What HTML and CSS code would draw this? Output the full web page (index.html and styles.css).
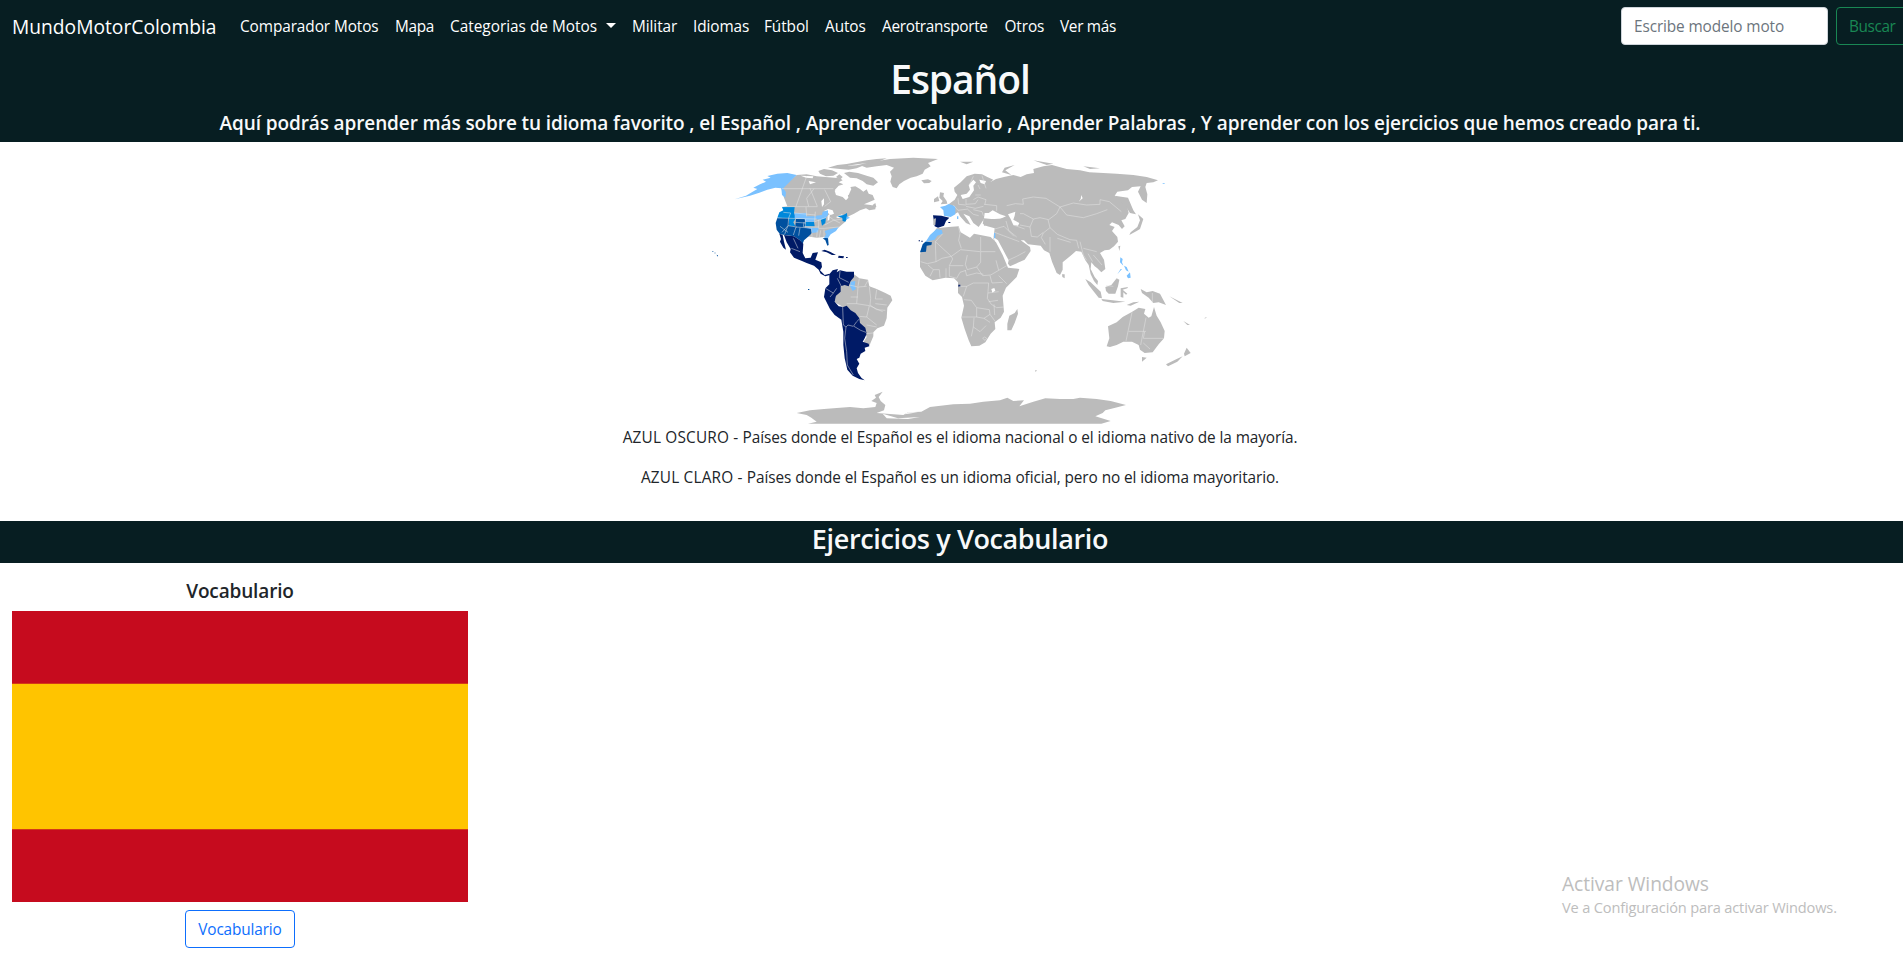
FILE: index.html
```html
<!DOCTYPE html>
<html lang="es">
<head>
<meta charset="utf-8">
<title>Español - MundoMotorColombia</title>
<link rel="stylesheet" href="styles.css">
</head>
<body>
<div class="page">
  <nav class="navbar">
    <a class="brand">MundoMotorColombia</a>
    <ul class="menu">
      <li>Comparador Motos</li><li class="mapa">Mapa</li><li class="dropdown">Categorias de Motos</li><li>Militar</li><li>Idiomas</li><li>Fútbol</li><li>Autos</li><li class="aero">Aerotransporte</li><li>Otros</li><li class="more">Ver más</li>
    </ul>
    <form class="search">
      <input class="search-input" type="text" placeholder="Escribe modelo moto">
      <button class="btn btn-success" type="button">Buscar</button>
    </form>
  </nav>
  <header class="hero">
    <h1>Español</h1>
    <h5>Aquí podrás aprender más sobre tu idioma favorito , el Español , Aprender vocabulario , Aprender Palabras , Y aprender con los ejercicios que hemos creado para ti.</h5>
  </header>
  <section class="map-section">
    <svg class="map" viewBox="0 -9 1560 846" role="img" aria-label="Mapa">
      <!-- Norteamérica -->
      <g class="land">
        <path d="M290 90L320 88 350 94 385 97 420 100 428 106 416 112 430 118 420 127 404 137 408 150 428 156 438 166 445 158 442 142 452 126 466 124 480 132 490 140 500 133 506 146 518 150 524 164 508 171 492 178 512 180 527 184 526 193 508 196 498 190 480 196 462 206 446 214 434 232 420 244 410 252 392 262 374 276 350 278 310 272 258 250 248 186 262 184 252 158 244 130Z"/>
        <path d="M355 78L372 72 396 76 414 84 400 92 378 94 360 86ZM384 68L412 60 440 57 468 52 500 46 530 42 560 40 540 48 516 55 492 61 470 70 446 74 420 72ZM432 84L448 80 474 84 500 92 520 98 534 112 520 122 500 118 488 108 470 100 450 98ZM418 88L428 96 420 104 408 96Z"/>
        <path d="M484 62L520 50 570 42 640 38 714 42 684 54 692 64 674 74 668 86 650 94 632 98 612 108 598 118 590 130 578 126 571 110 575 94 570 80 582 68 560 60 530 64 500 68Z"/>
        <path d="M664 106L684 103 695 108 688 114 672 115Z"/>
        <path d="M518 180l8-6 3 12-12 4zM488 104l14 2 10 10-12 0z"/>
      </g>
      <path class="water" d="M405 134L416 122 432 118 448 122 454 132 446 150 436 152 430 142 412 144ZM372 198L384 192 398 196 402 206 392 210 384 204ZM383 212L390 206 388 224 383 228ZM302 92L340 94 338 100 318 98ZM326 108L348 112 330 118ZM364 168l8-8 0 18-6 8zM408 216l18-8 4 4-16 8zM500 72L530 66 562 70 540 76ZM460 76L500 80 490 85ZM440 62L500 54 470 61Z"/>
      <!-- Estados Unidos -->
      <path class="light" d="M290 90L262 84 232 86 202 93 212 98 188 104 198 110 180 118 160 128 172 132 158 140 138 152 104 163 150 152 178 143 202 134 226 128 244 130 246 150 256 158 258 142 250 130Z"/>
      <path class="sky" d="M246 186L284 186 282 204 288 218 280 232 286 244 264 242 266 220 232 218 238 202 250 196ZM311 231L342 231 344 244 312 244ZM362 222L378 216 376 234 366 242ZM412 214L430 210 441 204 442 218 436 230 428 228 426 218Z"/>
      <path class="mid" d="M232 219L266 219 268 242 286 244 288 222 316 222 316 248 335 250 336 264 326 274 312 286 308 296 300 286 282 274 240 268 230 254 227 234ZM368 280L384 278 386 300 382 302 376 286Z"/>
      <path class="light" d="M284 204L318 204 320 214 346 214 346 222 342 230 316 230 314 222 284 220ZM348 212L366 210 368 200 384 196 384 210 378 218 362 224 346 222ZM310 248L356 248 354 262 336 264 334 252ZM374 258L392 252 416 246 408 258 392 268 384 280 372 278 378 268ZM440 214l10 4-12 6z"/>
      <!-- México, Caribe y Centroamérica -->
      <path class="dark" d="M238 266L248 270 252 290 258 314 250 308 240 290 243 282ZM252 270L282 274 300 286 310 296 308 324 316 340 332 338 338 324 354 322 346 344 364 352 366 366 360 376 374 390 388 386 390 390 376 394 362 386 356 374 342 362 320 354 306 348 282 338 270 322 272 312 260 292ZM364 318L374 314 390 320 408 330 396 330 380 322ZM416 332L432 334 430 340 414 338ZM438 336h5v3h-5z"/>
      <!-- Sudamérica -->
      <path class="land" d="M462 388L478 400 504 404 508 424 530 432 556 444 572 452 577 466 562 488 560 520 552 542 532 550 520 562 520 574 508 602 490 592 500 576 490 550 470 520 430 486 404 472 412 430 430 410Z"/>
      <path class="dark" d="M388 388L398 376 414 372 410 382 420 376 440 380 462 380 462 396 452 408 446 424 434 420 422 424 422 440 408 452 404 470 416 484 430 486 440 482 452 496 466 504 478 520 480 534 496 548 500 566 494 580 488 590 506 596 508 604 494 608 496 618 482 626 478 638 470 642 478 656 470 670 474 684 484 698 494 706 478 702 458 692 442 674 434 640 430 600 430 560 424 524 404 510 390 492 372 456 376 430 388 418Z"/>
      <path class="light" d="M452 410L466 408 464 422 468 432 458 438 450 424Z"/>
      <!-- Europa y Asia -->
      <g class="land">
        <path d="M720 142L732 144 730 154 740 168 742 176 722 178 728 168 718 158ZM702 162L714 154 718 168 702 172Z"/>
        <path d="M762 128L782 112 800 94 824 86 846 88 862 96 880 104 870 112 888 102 912 96 940 90 962 96 980 88 1002 84 1000 72 1030 64 1056 60 1078 66 1100 72 1140 76 1168 82 1210 84 1250 86 1300 90 1340 96 1374 106 1360 112 1340 114 1336 126 1342 148 1340 174 1326 164 1314 140 1322 124 1296 126 1284 136 1252 140 1244 152 1264 164 1280 178 1286 204 1276 222 1264 226 1274 244 1266 252 1256 240 1236 232 1228 240 1244 246 1236 258 1252 276 1254 290 1242 304 1228 314 1214 316 1200 324 1212 344 1216 372 1204 382 1192 370 1184 364 1174 352 1172 372 1184 396 1194 408 1192 420 1182 408 1172 388 1166 360 1156 346 1144 320 1128 318 1110 334 1088 352 1088 374 1080 390 1070 384 1056 350 1048 324 1032 316 1022 302 984 298 972 286 962 286 990 306 992 318 974 344 930 364 924 356 896 312 880 282 884 250 862 244 848 236 852 222 836 246 820 234 808 214 790 206 804 226 812 240 798 234 780 214 774 202 752 214 746 178 764 164 772 150 764 140Z"/>
        <path d="M1244 152L1284 158 1300 196 1308 208 1290 204 1276 182 1260 168Z"/>
        <path d="M1314 208L1330 222 1320 252 1310 258 1288 270 1292 262 1312 246 1320 226ZM1255 304l6-2-3 16zM1086 388l8 0 0 12-7-4zM906 82l8-14 30-8-28 16 18 14zM780 50l40 0-20 8zM1000 46l60 10-20 4zM1150 64l50 6-30 2z"/>
      </g>
      <path class="water" d="M800 146L810 134 806 120 820 104 828 112 820 122 822 136 808 156 788 162 782 150ZM852 220L854 204 866 204 878 196 900 208 918 214 900 222 874 222ZM924 208L946 200 944 212 940 224 958 234 954 242 940 240 932 222ZM880 276L894 286 910 316 926 346 922 364 910 354 896 324ZM1144 150l4 10-12 10 6-8zM838 104l20 4-4 10-12-4z"/>
      <path class="land" d="M850 224L918 220 912 240 852 242Z"/>
      <path class="dark" d="M699 211L724 212 748 218 738 228 732 242 714 248 704 244ZM745 231h6v3h-6z"/>
      <path class="land" d="M700 222L708 220 706 240 700 240Z"/>
      <path class="light" d="M720 186L736 182 746 177 766 184 766 208 752 216 732 212 730 196ZM771 214h4v8h-4z"/>
      <!-- África -->
      <path class="land" d="M710 250L746 246 776 244 782 262 810 278 822 266 872 276 888 292 908 330 924 368 958 372 950 396 918 428 908 452 912 500 902 518 884 532 886 552 872 566 856 592 838 602 814 604 806 586 794 552 784 518 792 482 786 456 774 444 774 412 762 400 736 398 698 406 676 392 660 366 660 330 664 312Z"/>
      <path class="light" d="M710 252L726 256 728 266 712 272 704 284 676 292 690 270Z"/>
      <path class="mid" d="M660 322L668 298 676 290 696 292 694 300 680 302 678 320Z"/>
      <path class="dark" d="M775 419h6v6h-6zM656 286h4v3h-4zM664 287h4v3h-4z"/>
      <path class="light" d="M882 264h4v16h-4z"/>
      <path class="land" d="M952 492L954 506 944 534 934 556 922 556 922 536 928 512 944 504Z"/>
      <path class="water" d="M874 432l9-3 3 8-9 6z"/>
      <!-- Sudeste asiático y Oceanía -->
      <g class="land">
        <path d="M1156 402L1172 412 1202 440 1206 460 1196 458 1180 438 1166 420ZM1204 462L1238 466 1276 470 1240 474 1208 468ZM1216 426L1234 420 1250 400 1258 404 1254 424 1246 446 1226 446 1218 438ZM1262 430L1284 426 1282 430 1268 434 1282 446 1278 449 1270 442 1270 458 1262 456ZM1322 432L1340 442 1358 438 1380 446 1398 480 1376 472 1360 474 1346 458 1326 444ZM1280 480l20-8 18-2-26 12z"/>
        <path d="M1220 604L1228 580 1224 544 1250 532 1268 516 1294 502 1304 496 1316 488 1336 492 1332 506 1346 518 1354 514 1362 486 1370 512 1382 532 1394 558 1392 580 1376 598 1358 622 1334 624 1320 614 1316 600 1296 590 1270 590 1250 600 1230 606Z"/>
        <path d="M1326 636L1340 638 1326 650ZM1460 608L1472 624 1454 634 1452 626ZM1448 634L1432 650 1404 664 1398 658 1430 642ZM1450 528l20 12-8 0zM1512 520l8-4-2 4zM1408 454l40 20-10 0zM1005 676l6 0-4 5z"/>
      </g>
      <path class="light" d="M1261 337L1268 342 1266 352 1270 362 1260 352ZM1272 362l8 4 6 14-8-4zM1280 392L1290 382 1292 398 1284 400ZM1266 372l-14 16 10-16zM1388 114h6v2h-6z"/>
      <path class="mid" d="M37 319h3v2h-3zM43 323h4v2h-4zM50 329l4 2-2 4zM324 432h4v3h-4z"/>
      <!-- Antártida -->
      <path class="land" d="M290 804L330 796 372 792 420 788 450 786 490 790 526 786 530 774 514 768 528 758 524 750 548 740 536 756 542 768 556 780 552 796 530 804 580 808 610 810 624 802 664 800 690 786 760 778 810 776 850 770 900 766 922 758 940 768 972 766 958 784 1000 770 1036 760 1080 762 1120 762 1140 758 1190 762 1232 768 1278 780 1246 788 1216 796 1208 804 1186 814 1232 828 1204 836 324 836 350 830 334 818 320 810Z"/>
      <path class="white" d="M548 806L594 820 660 816 624 822 560 820ZM624 802l30 0-40 6z"/>
      <!-- Fronteras -->
      <g class="borders">
        <path d="M246 131H400M320 94L288 184M342 131L320 160 326 184M330 130L352 184M374 134L392 170 374 184M246 185H352M318 186L320 214M284 204L346 210M232 219L350 222M266 219L264 242 290 246M316 222V248L288 246 280 270M264 242L254 268M246 262L264 242M250 202L272 204 266 219M300 248L296 272M286 232L318 234M240 244L264 262M346 200L344 230 378 218M312 231L310 245 340 246 356 246M356 224V250L374 250M374 250L416 246M334 250L336 276M352 256L350 278M362 256L358 278M372 254V276M374 240L400 226 428 222M384 212L400 224 420 234"/>
        <path d="M412 400L424 424M420 378L418 398 446 412M376 430L400 444 410 430M400 444L390 456M428 486L430 540 438 546M438 546L444 540 460 544 470 530 478 522M438 546L434 580 440 620 442 660 460 690M462 544L482 556 498 562M478 400L474 424M504 406L494 424M448 420L474 426 500 424M474 426L470 476 440 476M508 426L512 460 510 480 530 494M530 434L526 462 548 462M470 476L508 482 500 516 478 514M530 494L556 496M508 482L548 500M500 516L530 540M500 540L530 546M498 566L520 564M274 310L300 320M280 280L294 310M452 456L474 456M526 476L560 480"/>
        <path d="M760 180L774 196 804 192M774 160L776 178 798 180M798 162V178L826 176 834 164M798 184L826 190 850 184M820 164L834 156 858 164 854 180M804 194L820 208 836 212M820 194L846 200 850 212M826 150L842 150M834 120L840 132M820 94L808 120M846 92L858 130M854 178L890 182 890 198M920 182L946 176 970 178 968 162 1000 156 1038 160 1080 186 1070 206 1046 224 1020 218 1000 222 970 206 960 206M1080 186L1120 174 1160 180 1200 178 1200 164 1228 170 1264 200M1080 186L1100 210 1150 218 1190 206 1222 194M1044 224L1050 248 1072 268 1110 284 1130 286M1050 248L1030 264 1024 278 1036 298M1000 222L990 246 994 274 1012 276 1030 262M1050 276L1050 320M1072 280L1112 292M1130 286L1136 310M1140 290L1150 330 1160 346M1150 310L1190 320M1164 326L1178 350M1180 330L1206 360M918 228L926 256 950 276M912 244L884 252M912 244L942 274M884 262L910 272 958 290M924 346L950 334 976 320M940 240L974 252M990 246L960 240"/>
        <path d="M728 266L706 290 754 334 782 314 840 320M776 246L780 266 776 286 784 310M842 276V320H886M842 320V352L830 366 802 374 796 358 802 330M706 290L708 350 682 356 662 350M708 350L726 340 754 334 758 342 748 362 790 362M684 360L700 374 690 394M700 374L718 374 720 398M738 370V398M748 364V394L770 400 780 382 798 376M796 376L800 392 830 384 850 388M830 366L848 392 872 390 896 376 920 362M888 346L896 376M896 392L920 416M870 392L876 414 908 412M866 414L864 440 862 460 874 478 890 488M776 424H800L820 414 866 414M800 424L790 454M792 464L814 466 830 488V516H784M830 488L868 494 870 508 852 520 830 516M822 518L820 546 814 574M820 546L840 560 858 542M852 520L870 532M870 508L886 530M882 478L884 510M890 488L912 486M864 444L896 440M866 470L894 466M848 580l6-4 6 4-5 6z"/>
        <path d="M1296 502L1278 588M1338 518L1322 600M1286 559H1338M1334 560L1330 580H1392M1330 594L1350 612M1357 444V474M1218 422L1240 424"/>
      </g>
    </svg>
    <p><span class="legend-name">AZUL OSCURO - </span>Países donde el Español es el idioma nacional o el idioma nativo de la mayoría.</p>
    <p><span class="legend-name">AZUL CLARO - </span>Países donde el Español es un idioma oficial, pero no el idioma mayoritario.</p>
  </section>
  <h3 class="section-title">Ejercicios y Vocabulario</h3>
  <section class="cards">
    <article class="card">
      <h5>Vocabulario</h5>
      <svg class="flag" viewBox="0 0 456 291" role="img" aria-label="España">
        <rect class="flag-red" width="456" height="291"/>
        <rect class="flag-yellow" y="72.75" width="456" height="145.5"/>
      </svg>
      <button class="btn btn-primary" type="button">Vocabulario</button>
    </article>
  </section>
  <aside class="watermark">
    <div class="wm-title">Activar Windows</div>
    <div class="wm-text">Ve a Configuración para activar Windows.</div>
  </aside>
</div>
</body>
</html>
```

FILE: styles.css
```css
* { box-sizing: border-box; }
body {
  margin: 0;
  overflow: hidden;
  background: #fff;
  color: #212529;
  font: 400 15.36px/24px "Open Sans", "Noto Sans", sans-serif;
  letter-spacing: -0.08px;
}
.page { width: 1920px; height: 963px; overflow: hidden; }
h1, h3, h5, p, ul { margin: 0; padding: 0; }

.navbar {
  display: flex;
  align-items: center;
  height: 53px;
  padding: 7px 12px 8px;
  background: #071e22;
  color: #fff;
}
.brand { width: 228px; padding-top: 2px; font-size: 19.2px; line-height: 30px; letter-spacing: 0.02px; }
.menu {
  display: grid;
  grid-template-columns: 155px 55px 182px 61px 71px 61px 57px 122.5px 55.5px 70px;
  flex: 1;
  padding-top: 2px;
  list-style: none;
  white-space: nowrap;
}
.mapa, .aero, .more { letter-spacing: -0.3px; }
.dropdown { letter-spacing: 0; }
.dropdown::after {
  content: "";
  display: inline-block;
  margin-left: 9px;
  vertical-align: 4px;
  border-top: 5px solid;
  border-left: 5px solid transparent;
  border-right: 5px solid transparent;
}
.search { display: flex; gap: 8px; }
.search-input {
  width: 207px;
  height: 38px;
  padding: 6px 12px;
  border: 1px solid #ced4da;
  border-radius: 4px;
  background: #fff;
  font: inherit;
  letter-spacing: -0.11px;
}
.search-input::placeholder { color: #6c757d; opacity: 1; }
.btn {
  height: 38px;
  padding: 7px 12px 5px;
  border: 1px solid;
  border-radius: 4px;
  background: transparent;
  font: inherit;
  letter-spacing: -0.13px;
}
.btn-success { width: 72px; color: #198754; letter-spacing: -0.4px; }
.btn-primary { width: 110px; color: #0d6efd; }

.hero { height: 89px; padding-top: 2px; background: #071e22; color: #f8f9fa; text-align: center; }
.hero h1 { margin-bottom: 8px; font-size: 39px; font-weight: 600; line-height: 48px; letter-spacing: -1.1px; }
h5 { font-size: 19px; font-weight: 600; line-height: 24px; letter-spacing: -0.11px; }

.map-section { display: flex; flex-direction: column; align-items: center; height: 379px; }
.map-section p { margin-bottom: 16px; letter-spacing: -0.085px; }
.map-section .legend-name { letter-spacing: 0.19px; }
.map { display: block; width: 520px; height: 282px; margin-bottom: 2px; }
.land { fill: #bbb; }
.dark { fill: #001a66; }
.mid { fill: #00509f; }
.sky { fill: #0088db; }
.light { fill: #7ac1ff; }
.water, .white { fill: #fff; }
.borders { fill: none; stroke: #e6e6e6; stroke-width: 2; stroke-opacity: .75; stroke-linejoin: round; }

.section-title {
  height: 42px;
  padding-top: 1px;
  background: #071e22;
  color: #f8f9fa;
  font-size: 27px;
  font-weight: 600;
  line-height: 34px;
  letter-spacing: -0.36px;
  text-align: center;
}
.cards { display: grid; grid-template-columns: repeat(4, 1fr); padding-top: 16px; }
.card { display: flex; flex-direction: column; align-items: center; padding: 0 12px; }
.card h5 { margin-bottom: 8px; letter-spacing: -0.15px; }
.flag { display: block; width: 456px; height: 291px; margin-bottom: 8px; }
.flag-red { fill: #c60b1e; }
.flag-yellow { fill: #ffc400; }

.watermark { position: absolute; left: 1562px; top: 871px; color: #bdbdbd; white-space: nowrap; }
.wm-title { font-size: 19.2px; line-height: 26px; letter-spacing: -0.05px; }
.wm-text { font-size: 14.6px; line-height: 20px; letter-spacing: -0.16px; }
```
